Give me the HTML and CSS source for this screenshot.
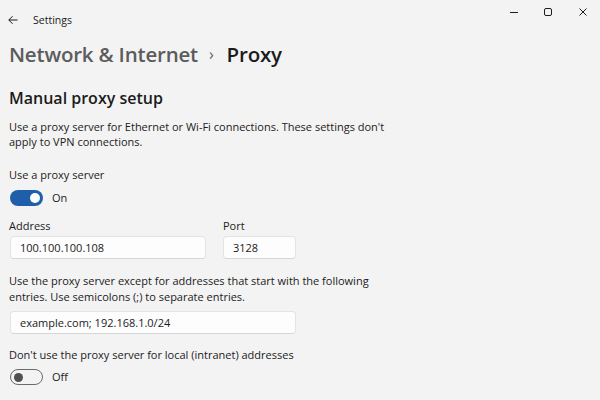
FILE: index.html
```html
<!DOCTYPE html>
<html>
<head>
<meta charset="utf-8">
<link rel="stylesheet" href="styles.css">
</head>
<body>
<div class="titlebar">
  <div class="tb-left">
    <svg class="back" width="10" height="10" viewBox="0 0 10 10"><path d="M9.5 5H0.8M4.6 1.2L0.8 5l3.8 3.8" fill="none" stroke="#1b1b1b" stroke-width="1"/></svg>
    <span class="app">Settings</span>
  </div>
  <div class="controls">
    <div class="ctl"><svg width="10" height="10" viewBox="0 0 10 10"><path d="M1 5.5h8" stroke="#1b1b1b" stroke-width="1"/></svg></div>
    <div class="ctl"><svg width="10" height="10" viewBox="0 0 10 10"><rect x="1.5" y="1.5" width="7" height="7" rx="1.5" fill="none" stroke="#1b1b1b" stroke-width="1"/></svg></div>
    <div class="ctl"><svg width="10" height="10" viewBox="0 0 10 10"><path d="M1.5 1.5l7 7M8.5 1.5l-7 7" stroke="#1b1b1b" stroke-width="1"/></svg></div>
  </div>
</div>
<div class="content">
  <h1 class="crumbs"><span class="parent">Network &amp; Internet</span><span class="sep">›</span><span class="current">Proxy</span></h1>
  <h2 class="section">Manual proxy setup</h2>
  <p class="desc">Use a proxy server for Ethernet or Wi-Fi connections. These settings don't apply to VPN connections.</p>
  <div class="label first">Use a proxy server</div>
  <div class="toggle-row">
    <span class="toggle on"><span class="knob"></span></span>
    <span class="state">On</span>
  </div>
  <div class="fields">
    <div class="field">
      <div class="flabel">Address</div>
      <div class="input addr">100.100.100.108</div>
    </div>
    <div class="field">
      <div class="flabel">Port</div>
      <div class="input port">3128</div>
    </div>
  </div>
  <p class="desc2">Use the proxy server except for addresses that start with the following entries. Use semicolons (;) to separate entries.</p>
  <div class="input excl">example.com; 192.168.1.0/24</div>
  <div class="label local">Don't use the proxy server for local (intranet) addresses</div>
  <div class="toggle-row off-row">
    <span class="toggle off"><span class="knob"></span></span>
    <span class="state">Off</span>
  </div>
</div>
</body>
</html>
```
FILE: styles.css
```css
* { box-sizing: border-box; }
html, body { margin: 0; padding: 0; }
body {
  width: 600px;
  height: 400px;
  overflow: hidden;
  background: #f3f3f3;
  font-family: "Segoe UI", "Open Sans", "Noto Sans", sans-serif;
  color: #1b1b1b;
  font-size: 11px;
}
.titlebar {
  height: 40px;
  display: flex;
  justify-content: space-between;
  align-items: flex-start;
}
.tb-left {
  display: flex;
  align-items: center;
  height: 40px;
  padding-left: 8px;
}
.back { display: block; }
.app {
  margin-left: 15px;
  font-size: 10.5px;
  line-height: 16px;
}
.controls { display: flex; height: 24px; }
.ctl {
  width: 34.5px;
  height: 24px;
  display: flex;
  align-items: center;
  justify-content: center;
}
.content { padding-left: 9px; }
.crumbs {
  margin: 0;
  height: 28px;
  line-height: 28px;
  font-size: 20.5px;
  font-weight: 600;
  display: flex;
  align-items: center;
  letter-spacing: -0.2px;
}
.parent { color: #5c5c5c; }
.sep {
  color: #5c5c5c;
  font-size: 16px;
  font-weight: 400;
  margin: 0 13px 0 11px;
}
.current { color: #1b1b1b; }
.section {
  margin: 20px 0 0;
  font-size: 16px;
  font-weight: 600;
  line-height: 20px;
}
.desc {
  margin: 11px 0 0;
  width: 400px;
  line-height: 15px;
}
.label { line-height: 16px; }
.label.first { margin-top: 18px; }
.toggle-row {
  display: flex;
  align-items: center;
  height: 16px;
  margin-top: 7px;
}
.toggle {
  width: 33px;
  height: 16px;
  border-radius: 8px;
  display: flex;
  align-items: center;
  margin-left: 1px;
}
.toggle.on {
  background: #1f5fa9;
  justify-content: flex-end;
  padding-right: 3px;
}
.toggle.on .knob {
  width: 10px;
  height: 10px;
  border-radius: 50%;
  background: #ffffff;
}
.toggle.off {
  border: 1px solid #6b6b6b;
  padding-left: 3px;
}
.toggle.off .knob {
  width: 9px;
  height: 9px;
  border-radius: 50%;
  background: #505050;
}
.state { margin-left: 9px; line-height: 16px; }
.fields {
  display: flex;
  gap: 17px;
  margin-top: 12px;
}
.flabel { line-height: 16px; margin-bottom: 2px; }
.input {
  height: 23px;
  background: #fdfdfd;
  border: 1px solid #e3e3e3;
  border-bottom-color: #d6d6d6;
  border-radius: 4px;
  line-height: 21px;
  padding-left: 9px;
  margin-left: 1px;
}
.input.addr { width: 196px; }
.input.port { width: 73px; margin-left: 0; }
.desc2 {
  margin: 14px 0 0;
  width: 400px;
  line-height: 16px;
}
.input.excl { width: 286px; margin-top: 6px; }
.label.local { margin-top: 13px; }
.off-row { margin-top: 6px; }
```
